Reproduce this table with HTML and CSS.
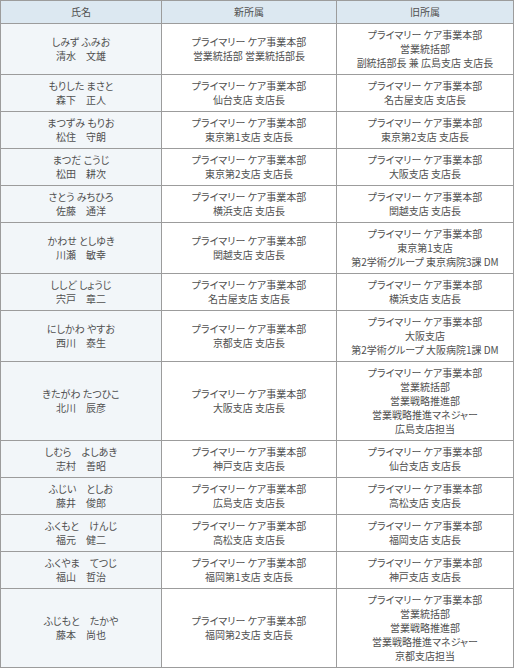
FILE: index.html
```html
<!DOCTYPE html>
<html lang="ja">
<head>
<meta charset="utf-8">
<link rel="stylesheet" href="styles.css">
</head>
<body>
<table class="roster">
<colgroup><col class="c-name"><col class="c-new"><col class="c-old"></colgroup>
<thead>
<tr><th>氏名</th><th>新所属</th><th>旧所属</th></tr>
</thead>
<tbody>
<tr><td class="name">しみず ふみお<br>清水　文雄</td><td>プライマリー ケア事業本部<br>営業統括部 営業統括部長</td><td>プライマリー ケア事業本部<br>営業統括部<br>副統括部長 兼 広島支店 支店長</td></tr>
<tr><td class="name">もりした まさと<br>森下　正人</td><td>プライマリー ケア事業本部<br>仙台支店 支店長</td><td>プライマリー ケア事業本部<br>名古屋支店 支店長</td></tr>
<tr><td class="name">まつずみ もりお<br>松住　守朗</td><td>プライマリー ケア事業本部<br>東京第1支店 支店長</td><td>プライマリー ケア事業本部<br>東京第2支店 支店長</td></tr>
<tr><td class="name">まつだ こうじ<br>松田　耕次</td><td>プライマリー ケア事業本部<br>東京第2支店 支店長</td><td>プライマリー ケア事業本部<br>大阪支店 支店長</td></tr>
<tr><td class="name">さとう みちひろ<br>佐藤　通洋</td><td>プライマリー ケア事業本部<br>横浜支店 支店長</td><td>プライマリー ケア事業本部<br>関越支店 支店長</td></tr>
<tr><td class="name">かわせ としゆき<br>川瀬　敏幸</td><td>プライマリー ケア事業本部<br>関越支店 支店長</td><td>プライマリー ケア事業本部<br>東京第1支店<br>第2学術グループ 東京病院3課 DM</td></tr>
<tr><td class="name">ししど しょうじ<br>宍戸　章二</td><td>プライマリー ケア事業本部<br>名古屋支店 支店長</td><td>プライマリー ケア事業本部<br>横浜支店 支店長</td></tr>
<tr><td class="name">にしかわ やすお<br>西川　泰生</td><td>プライマリー ケア事業本部<br>京都支店 支店長</td><td>プライマリー ケア事業本部<br>大阪支店<br>第2学術グループ 大阪病院1課 DM</td></tr>
<tr><td class="name">きたがわ たつひこ<br>北川　辰彦</td><td>プライマリー ケア事業本部<br>大阪支店 支店長</td><td>プライマリー ケア事業本部<br>営業統括部<br>営業戦略推進部<br>営業戦略推進マネジャー<br>広島支店担当</td></tr>
<tr><td class="name">しむら　よしあき<br>志村　善昭</td><td>プライマリー ケア事業本部<br>神戸支店 支店長</td><td>プライマリー ケア事業本部<br>仙台支店 支店長</td></tr>
<tr><td class="name">ふじい　としお<br>藤井　俊郎</td><td>プライマリー ケア事業本部<br>広島支店 支店長</td><td>プライマリー ケア事業本部<br>高松支店 支店長</td></tr>
<tr><td class="name">ふくもと　けんじ<br>福元　健二</td><td>プライマリー ケア事業本部<br>高松支店 支店長</td><td>プライマリー ケア事業本部<br>福岡支店 支店長</td></tr>
<tr><td class="name">ふくやま　てつじ<br>福山　哲治</td><td>プライマリー ケア事業本部<br>福岡第1支店 支店長</td><td>プライマリー ケア事業本部<br>神戸支店 支店長</td></tr>
<tr><td class="name">ふじもと　たかや<br>藤本　尚也</td><td>プライマリー ケア事業本部<br>福岡第2支店 支店長</td><td>プライマリー ケア事業本部<br>営業統括部<br>営業戦略推進部<br>営業戦略推進マネジャー<br>京都支店担当</td></tr>
</tbody>
</table>
</body>
</html>
```
FILE: styles.css
```css
html, body {
  margin: 0;
  padding: 0;
  background: #ffffff;
}
body {
  font-family: "Noto Sans CJK JP", "Noto Sans", sans-serif;
  font-size: 10px;
  line-height: 14px;
  color: #505050;
  font-feature-settings: "palt" 1;
}
.roster {
  border-collapse: collapse;
  table-layout: fixed;
  width: 513px;
}
.c-name { width: 161px; }
.c-new { width: 175px; }
.c-old { width: 177px; }
.roster th,
.roster td {
  border: 1px solid #9c9c9c;
  padding: 4px 2px;
  text-align: center;
  vertical-align: middle;
  font-weight: normal;
  white-space: nowrap;
}
.roster th {
  background: #dce8f1;
}
.roster td.name {
  background: #f2f6f9;
}
```
